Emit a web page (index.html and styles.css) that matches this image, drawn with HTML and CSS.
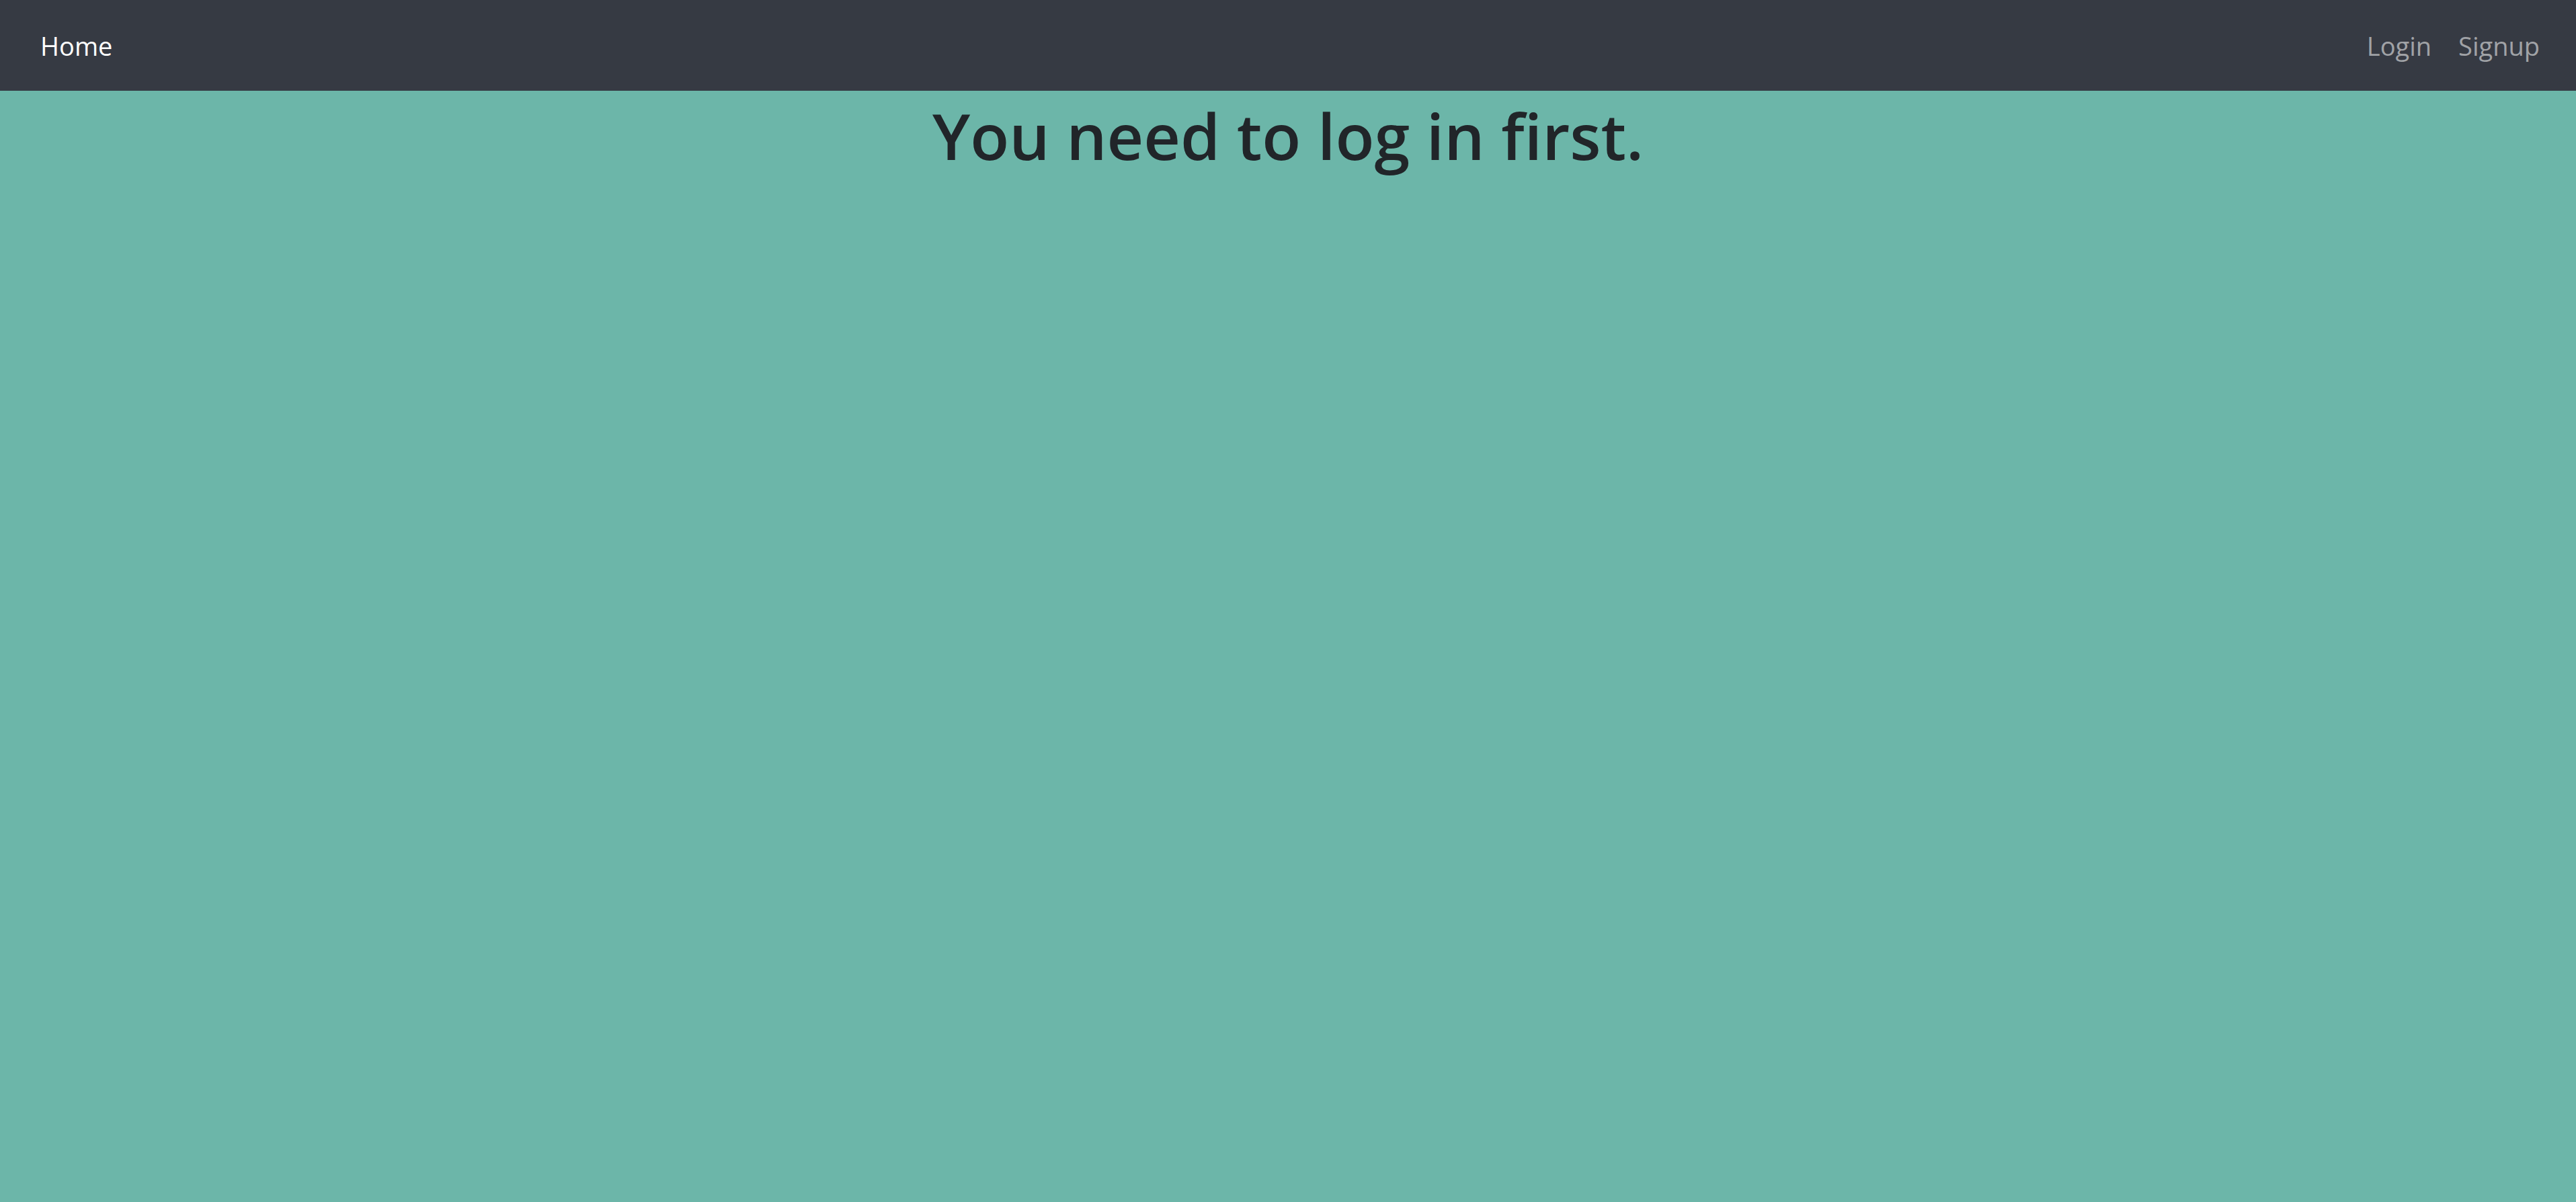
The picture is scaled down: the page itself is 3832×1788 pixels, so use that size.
FILE: index.html
```html
<!DOCTYPE html>
<html lang="en">
<head>
<meta charset="utf-8">
<title>Home</title>
<link rel="stylesheet" href="styles.css">
</head>
<body>
<nav class="navbar">
  <a class="nav-link active" href="#">Home</a>
  <div class="nav-right">
    <a class="nav-link" href="#">Login</a>
    <a class="nav-link" href="#">Signup</a>
  </div>
</nav>
<main class="content">
  <h1 class="title">You need to log in first.</h1>
</main>
</body>
</html>
```

FILE: styles.css
```css
html, body {
  margin: 0;
  padding: 0;
  height: 100%;
}
body {
  background: #6cb6a9;
  font-family: "Open Sans", "Noto Sans", sans-serif;
  color: #212529;
}
.navbar {
  height: 135px;
  background: #363a43;
  display: flex;
  align-items: center;
  justify-content: space-between;
  padding: 0 34px 0 40px;
  box-sizing: border-box;
}
.nav-right {
  display: flex;
}
.nav-link {
  font-size: 38px;
  line-height: 60px;
  padding: 0 20px;
  color: rgba(255, 255, 255, 0.55);
  text-decoration: none;
}
.nav-link.active {
  color: #ffffff;
}
.content {
  text-align: center;
}
.title {
  margin: 0;
  font-size: 95px;
  font-weight: 600;
  line-height: 1.2;
  padding-top: 9px;
}
```
